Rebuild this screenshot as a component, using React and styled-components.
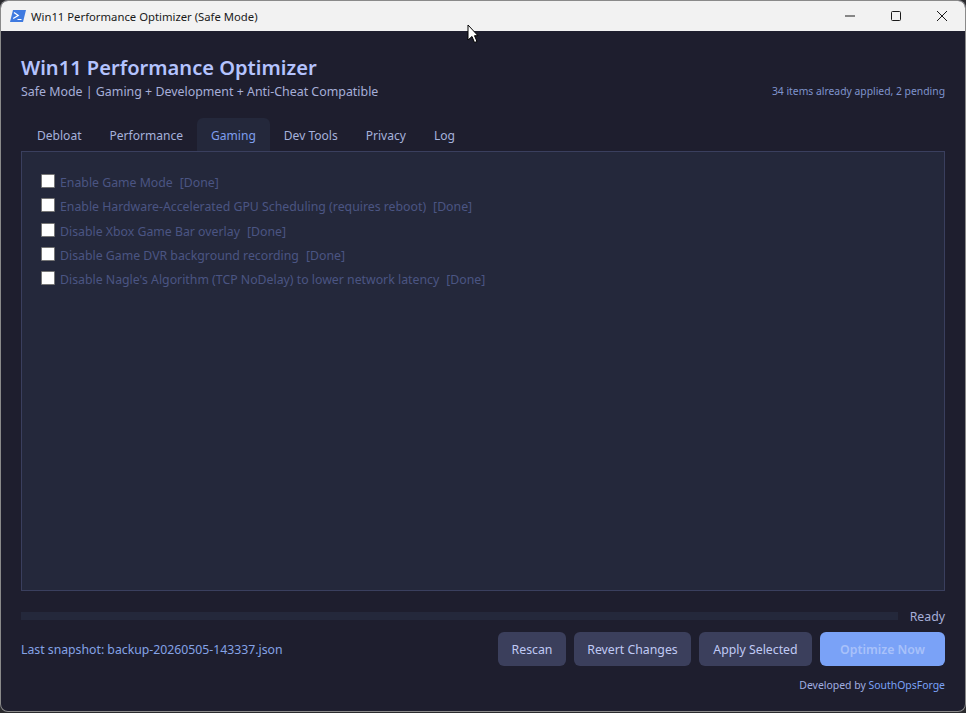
import React from "react";
import styled, { createGlobalStyle } from "styled-components";

const Global = createGlobalStyle`
  html, body { margin: 0; padding: 0; height: 100%; background: #2b2b2e; }
  #root { height: 713px; }
  * { box-sizing: border-box; }
`;

const Win = styled.div`
  position: relative;
  width: 966px;
  height: 712px;
  padding-top: 1px;
  display: flex;
  flex-direction: column;
  background: #1e1e2e;
  border-radius: 8px;
  overflow: hidden;
  font-family: "Noto Sans", "Open Sans", sans-serif;
  box-shadow: inset 0 0 0 1px #8a8a8a;
`;

const TitleBar = styled.div`
  height: 30px;
  flex: none;
  display: flex;
  align-items: center;
  background: #f2f2f2;
  color: #1a1a1a;
  font-size: 11.3px;
  padding-left: 9px;
  margin: 0 1px;
  border-radius: 7px 7px 0 0;
`;

const AppIcon = styled.svg`
  width: 16px;
  height: 14px;
  margin-right: 5px;
`;

const WinTitle = styled.span`
  flex: 1;
`;

const Ctrl = styled.button`
  width: 46px;
  height: 30px;
  padding: 0;
  border: 0;
  background: none;
  display: flex;
  align-items: center;
  justify-content: center;
`;

const Body = styled.div`
  flex: 1;
  display: flex;
  flex-direction: column;
  padding: 0 21px;
  min-height: 0;
`;

const Heading = styled.h1`
  margin: 22px 0 0;
  height: 29px;
  font-size: 20.1px;
  line-height: 29px;
  font-weight: 600;
  color: #b4c3fe;
`;

const SubRow = styled.div`
  display: flex;
  justify-content: space-between;
  align-items: center;
  height: 21px;
  margin-top: -1px;
`;

const Sub = styled.span`
  font-size: 12.4px;
  color: #a6aed8;
`;

const Count = styled.span`
  font-size: 10.35px;
  color: #7f93cc;
  padding-bottom: 2px;
`;

const Tabs = styled.div`
  display: flex;
  margin: 16px 0 0 2px;
  height: 33px;
`;

const Tab = styled.div`
  height: 33px;
  padding: 2px 14px 0;
  display: flex;
  align-items: center;
  font-size: 12.05px;
  border-radius: 6px 6px 0 0;
  color: ${(p) => (p.$active ? "#7f9fef" : "#a6b2dc")};
  background: ${(p) => (p.$active ? "#24283b" : "transparent")};
`;

const Panel = styled.div`
  height: 440px;
  flex: none;
  background: #24283b;
  border: 1px solid #3a3f5e;
  padding: 21px 19px 0;
  display: flex;
  flex-direction: column;
  gap: 5.25px;
`;

const Row = styled.label`
  display: flex;
  align-items: center;
  height: 19px;
  font-size: 12.3px;
  color: #4b5583;
`;

const Box = styled.span`
  width: 14px;
  height: 14px;
  background: #ffffff;
  border: 1px solid #767676;
  border-radius: 1px;
  margin-right: 5px;
  margin-top: -3px;
  flex: none;
`;

const Done = styled.span`
  margin-left: 7px;
`;

const ProgressRow = styled.div`
  display: flex;
  align-items: center;
  margin-top: 15px;
  height: 20px;
`;

const Track = styled.div`
  flex: 1;
  height: 8px;
  background: #24283b;
  margin-right: 12px;
`;

const Ready = styled.span`
  font-size: 12.3px;
  color: #a6aed8;
`;

const ActionRow = styled.div`
  display: flex;
  align-items: center;
  gap: 8px;
  margin-top: 6px;
  height: 34px;
`;

const Snapshot = styled.span`
  flex: 1;
  font-size: 12.25px;
  color: #85a3e6;
`;

const Btn = styled.button`
  width: ${(p) => p.$w}px;
  height: 34px;
  padding: 0;
  border: 0;
  border-radius: 6px;
  font-family: inherit;
  font-size: 12.3px;
  font-weight: ${(p) => (p.$primary ? 600 : 400)};
  background: ${(p) => (p.$primary ? "#7aa2f7" : "#3b3f5c")};
  color: ${(p) => (p.$primary ? "#a8c1fa" : "#c0caf5")};
`;

const Footer = styled.div`
  margin-top: 12px;
  text-align: right;
  font-size: 10.45px;
  color: #a0aee0;
`;

const Link = styled.span`
  color: #7aa2f7;
`;

const Cursor = styled.svg`
  position: absolute;
  left: 467px;
  top: 24px;
  width: 12px;
  height: 20px;
`;

const tabs = ["Debloat", "Performance", "Gaming", "Dev Tools", "Privacy", "Log"];

const items = [
  "Enable Game Mode",
  "Enable Hardware-Accelerated GPU Scheduling (requires reboot)",
  "Disable Xbox Game Bar overlay",
  "Disable Game DVR background recording",
  "Disable Nagle's Algorithm (TCP NoDelay) to lower network latency",
];

export default function App() {
  return (
    <>
      <Global />
      <Win>
        <TitleBar>
          <AppIcon viewBox="0 0 16 14">
            <path d="M3 1h13l-3 12H0z" fill="#3f7ae0" />
            <path d="M4 3.5l4.2 3-5 3" fill="none" stroke="#fff" strokeWidth="1.3" />
            <path d="M7.5 10.5h4" stroke="#fff" strokeWidth="1.2" />
          </AppIcon>
          <WinTitle>Win11 Performance Optimizer (Safe Mode)</WinTitle>
          <Ctrl aria-label="Minimize">
            <svg width="10" height="10" viewBox="0 0 10 10">
              <path d="M0 5h10" stroke="#1a1a1a" strokeWidth="1" />
            </svg>
          </Ctrl>
          <Ctrl aria-label="Maximize">
            <svg width="10" height="10" viewBox="0 0 10 10">
              <rect x=".5" y=".5" width="9" height="9" rx="1" fill="none" stroke="#1a1a1a" />
            </svg>
          </Ctrl>
          <Ctrl aria-label="Close">
            <svg width="10" height="10" viewBox="0 0 10 10">
              <path d="M0 0l10 10M10 0L0 10" stroke="#1a1a1a" strokeWidth="1" />
            </svg>
          </Ctrl>
        </TitleBar>
        <Body>
          <Heading>Win11 Performance Optimizer</Heading>
          <SubRow>
            <Sub>Safe Mode | Gaming + Development + Anti-Cheat Compatible</Sub>
            <Count>34 items already applied, 2 pending</Count>
          </SubRow>
          <Tabs>
            {tabs.map((t) => (
              <Tab key={t} $active={t === "Gaming"}>
                {t}
              </Tab>
            ))}
          </Tabs>
          <Panel>
            {items.map((t) => (
              <Row key={t}>
                <Box />
                {t}
                <Done>[Done]</Done>
              </Row>
            ))}
          </Panel>
          <ProgressRow>
            <Track />
            <Ready>Ready</Ready>
          </ProgressRow>
          <ActionRow>
            <Snapshot>Last snapshot: backup-20260505-143337.json</Snapshot>
            <Btn $w={68}>Rescan</Btn>
            <Btn $w={117}>Revert Changes</Btn>
            <Btn $w={113}>Apply Selected</Btn>
            <Btn $w={125} $primary>
              Optimize Now
            </Btn>
          </ActionRow>
          <Footer>
            Developed by <Link>SouthOpsForge</Link>
          </Footer>
        </Body>
        <Cursor viewBox="0 0 12 20">
          <path d="M1 1v15l4-3.5 2.5 6 2.5-1-2.5-5.8H11z" fill="#fff" stroke="#000" strokeWidth="1" />
        </Cursor>
      </Win>
    </>
  );
}
